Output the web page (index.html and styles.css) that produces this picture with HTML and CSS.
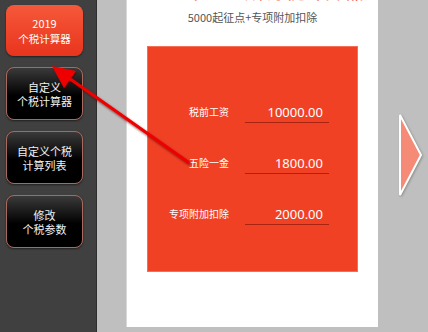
FILE: index.html
```html
<!DOCTYPE html>
<html lang="zh">
<head>
<meta charset="utf-8">
<link rel="stylesheet" href="styles.css">
</head>
<body>
<div class="app">
  <nav class="sidebar">
    <button class="nav-btn active"><span class="l1">2019</span><span>个税计算器</span></button>
    <button class="nav-btn"><span>自定义</span><span>个税计算器</span></button>
    <button class="nav-btn"><span>自定义个税</span><span>计算列表</span></button>
    <button class="nav-btn"><span>修改</span><span>个税参数</span></button>
  </nav>
  <main class="stage">
    <section class="page">
      <h1 class="title">2019年个人所得税计算器</h1>
      <p class="subtitle">5000起征点+专项附加扣除</p>
      <div class="panel">
        <div class="row"><span class="label">税前工资</span><span class="value">10000.00</span></div>
        <div class="row"><span class="label">五险一金</span><span class="value">1800.00</span></div>
        <div class="row"><span class="label">专项附加扣除</span><span class="value">2000.00</span></div>
      </div>
    </section>
    <svg class="next" width="28" height="88" viewBox="0 0 28 88">
      <polygon points="3,3 24,43 3,83" fill="#f58a76" stroke="#ffffff" stroke-width="2" stroke-linejoin="miter"/>
    </svg>
  </main>
  <svg class="pointer" width="428" height="332" viewBox="0 0 428 332">
    <defs>
      <filter id="sh" x="-10%" y="-10%" width="130%" height="130%">
        <feDropShadow dx="1" dy="1.5" stdDeviation="0.8" flood-color="#5a0000" flood-opacity="0.7"/>
      </filter>
    </defs>
    <g filter="url(#sh)">
      <line x1="188" y1="162" x2="66" y2="76" stroke="#ee0000" stroke-width="3" stroke-linecap="round"/>
      <polygon points="52,66 76,71 64,88" fill="#ee0000"/>
    </g>
  </svg>
</div>
</body>
</html>
```

FILE: styles.css
```css
html, body {
  margin: 0;
  padding: 0;
}
body {
  width: 428px;
  height: 332px;
  overflow: hidden;
  font-family: "Noto Sans CJK SC", "Noto Sans", sans-serif;
}
.app {
  position: relative;
  display: flex;
  width: 428px;
  height: 332px;
}
.sidebar {
  width: 97px;
  flex: none;
  background: #404040;
  border-right: 1px solid #2e2e2e;
  display: flex;
  flex-direction: column;
  gap: 11px;
  padding: 5px 0 0 6px;
  box-sizing: border-box;
}
.nav-btn {
  width: 77px;
  height: 53px;
  border-radius: 8px;
  border: 1px solid #a86a5e;
  background: linear-gradient(#3a3a3a, #000000 55%);
  color: #f2f2f2;
  font-family: inherit;
  font-size: 11px;
  line-height: 14px;
  display: flex;
  flex-direction: column;
  align-items: center;
  justify-content: center;
  padding: 0;
  box-shadow: 0 1px 2px rgba(0,0,0,0.5);
}
.nav-btn.active {
  height: 51px;
  border: none;
  background: linear-gradient(#f6583a, #e8351d);
  color: #ffffff;
  font-size: 10.5px;
  line-height: 16px;
}
.nav-btn.active .l1 {
  font-size: 11px;
}
.stage {
  position: relative;
  flex: 1;
  background: #bfbfbf;
  padding-left: 30px;
}
.page {
  width: 251px;
  height: 327px;
  background: #ffffff;
  box-shadow: -1px 0 0 #d8d8d8;
  display: flex;
  flex-direction: column;
  align-items: center;
  overflow: hidden;
}
.title {
  margin: -21px 0 0;
  font-size: 20px;
  line-height: 24px;
  font-weight: normal;
  color: #f26a50;
}
.subtitle {
  margin: 6px 0 0;
  font-size: 11px;
  line-height: 16px;
  color: #555555;
}
.panel {
  margin-top: 21px;
  width: 211px;
  height: 226px;
  box-sizing: border-box;
  background: #f04124;
  border: 1px solid #f66e56;
  display: flex;
  flex-direction: column;
  gap: 29px;
  padding-top: 54px;
}
.row {
  display: grid;
  grid-template-columns: 81px 84px;
  column-gap: 16px;
  align-items: end;
  height: 22px;
}
.label {
  text-align: right;
  font-size: 10px;
  line-height: 14px;
  color: #ffffff;
  padding-bottom: 4px;
}
.value {
  text-align: right;
  font-family: "Noto Sans", sans-serif;
  font-size: 13px;
  line-height: 20px;
  color: #ffffff;
  padding-right: 6px;
  border-bottom: 1px solid #a82410;
}
.next {
  position: absolute;
  left: 300px;
  top: 112px;
  filter: drop-shadow(1px 1px 1px rgba(0,0,0,0.25));
}
.pointer {
  position: absolute;
  left: 0;
  top: 0;
  pointer-events: none;
}
```
